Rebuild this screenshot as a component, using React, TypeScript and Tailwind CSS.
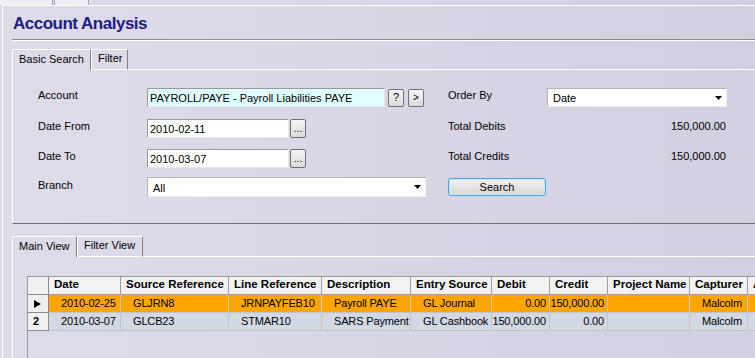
import React from "react";

type Col = {
  label: string;
  w: string;
  right?: boolean;
};

const columns: Col[] = [
  { label: "Date", w: "w-[72px]" },
  { label: "Source Reference", w: "w-[108px]" },
  { label: "Line Reference", w: "w-[93px]" },
  { label: "Description", w: "w-[89px]" },
  { label: "Entry Source", w: "w-[81px]" },
  { label: "Debit", w: "w-[58px]", right: true },
  { label: "Credit", w: "w-[58px]", right: true },
  { label: "Project Name", w: "w-[82px]" },
  { label: "Capturer", w: "w-[58px]" },
  { label: "Audit", w: "w-[80px]" },
];

const rows = [
  {
    selected: true,
    cells: ["2010-02-25", "GLJRN8", "JRNPAYFEB10", "Payroll PAYE", "GL Journal", "0.00", "150,000.00", "", "Malcolm", ""],
  },
  {
    selected: false,
    cells: ["2010-03-07", "GLCB23", "STMAR10", "SARS Payment", "GL Cashbook", "150,000.00", "0.00", "", "Malcolm", ""],
  },
];

const DropArrow = () => (
  <svg width="7" height="4" viewBox="0 0 7 4" className="shrink-0">
    <path d="M0 0 H7 L3.5 4 Z" fill="#000" />
  </svg>
);

const SmallButton = ({ children, className }: { children: React.ReactNode; className: string }) => (
  <div
    className={`flex items-center justify-center rounded-[2px] border border-[#707070] bg-gradient-to-b from-[#f6f6f6] to-[#dadada] leading-none ${className}`}
  >
    {children}
  </div>
);

const TextBox = ({ value, className }: { value: string; className: string }) => (
  <div
    className={`h-[19px] border border-t-[#9a9a9a] border-l-[#9a9a9a] border-b-[#e6e6e6] border-r-[#e6e6e6] pl-[2px] pt-[3px] leading-[13px] whitespace-nowrap overflow-hidden ${className}`}
  >
    {value}
  </div>
);

const Select = ({ value, className }: { value: string; className: string }) => (
  <div
    className={`flex items-center justify-between bg-white border border-t-[#b4b4b4] border-l-[#b4b4b4] border-b-[#eeeeee] border-r-[#eeeeee] pl-[5px] pr-[4px] ${className}`}
  >
    <span className="pt-[2px] leading-[13px]">{value}</span>
    <DropArrow />
  </div>
);

export default function App() {
  return (
    <div className="w-[755px] h-[358px] overflow-hidden bg-gradient-to-r from-[#dfdcea] to-[#d2cfe1] font-['Liberation_Sans',Arial,sans-serif] text-[11px] text-black">
      {/* clipped window tabs at the very top */}
      <div className="flex h-[5px]">
        <div className="w-[53px] bg-[#efeef4] border-r border-[#a9a9b3]" />
        <div className="ml-[1px] w-[35px] bg-[#efeef4] border-x border-[#a9a9b3]" />
      </div>

      <div className="ml-[2px] h-[353px] border-t border-l border-white">
        <h1 className="mt-[8px] pl-[10px] h-[20px] leading-[20px] text-[17px] font-bold tracking-[-0.5px] text-[#1c1c86]">
          Account Analysis
        </h1>
        <div className="mt-[5px] ml-[9px] h-[2px] border-t border-[#8c8c8c] border-b border-b-white" />

        {/* search panel */}
        <div className="mt-[8px] ml-[9px]">
          <div className="flex h-[21px]">
            <div className="w-[79px] border-t border-l border-white border-r border-r-[#808080] pl-[6px] pt-[3px] leading-[13px]">
              Basic Search
            </div>
            <div className="w-[37px] border-t border-l border-white border-r border-r-[#808080] border-b border-b-white pl-[6px] pt-[2px] leading-[13px]">
              Filter
            </div>
            <div className="flex-1 border-b border-white" />
          </div>

          <div className="h-[154px] border-l border-white border-b border-b-[#6f6f6f] pt-[18px] pl-[25px]">
            {/* row 1 */}
            <div className="flex h-[19px]">
              <div className="w-[410px] flex items-center">
                <div className="w-[109px] pb-[4px]">Account</div>
                <TextBox value="PAYROLL/PAYE - Payroll Liabilities PAYE" className="w-[238px] bg-[#e0ffff]" />
                <SmallButton className="ml-[3px] w-[16px] h-[18px] text-[11px]">?</SmallButton>
                <SmallButton className="ml-[4px] w-[16px] h-[18px] text-[10px]">&gt;</SmallButton>
              </div>
              <div className="flex items-center">
                <div className="w-[99px] pb-[4px]">Order By</div>
                <Select value="Date" className="w-[180px] h-[19px]" />
              </div>
            </div>

            {/* row 2 */}
            <div className="mt-[12px] flex h-[19px]">
              <div className="w-[410px] flex items-center">
                <div className="w-[109px] pb-[4px]">Date From</div>
                <TextBox value="2010-02-11" className="w-[142px] bg-white" />
                <SmallButton className="ml-[1px] w-[16px] h-[19px] items-end pb-[3px] text-[10px]">...</SmallButton>
              </div>
              <div className="flex items-center">
                <div className="w-[99px] pb-[4px]">Total Debits</div>
                <div className="w-[179px] text-right pb-[4px]">150,000.00</div>
              </div>
            </div>

            {/* row 3 */}
            <div className="mt-[11px] flex h-[19px]">
              <div className="w-[410px] flex items-center">
                <div className="w-[109px] pb-[4px]">Date To</div>
                <TextBox value="2010-03-07" className="w-[142px] bg-white" />
                <SmallButton className="ml-[1px] w-[16px] h-[19px] items-end pb-[3px] text-[10px]">...</SmallButton>
              </div>
              <div className="flex items-center">
                <div className="w-[99px] pb-[4px]">Total Credits</div>
                <div className="w-[179px] text-right pb-[4px]">150,000.00</div>
              </div>
            </div>

            {/* row 4 */}
            <div className="mt-[9px] flex h-[20px]">
              <div className="w-[410px] flex items-center">
                <div className="w-[109px] pb-[4px]">Branch</div>
                <Select value="All" className="w-[279px] h-[20px]" />
              </div>
              <div className="flex items-center">
                <div className="w-[98px] h-[18px] flex items-center justify-center rounded-[3px] border border-[#46a6dc] bg-gradient-to-b from-[#f3f3f3] to-[#d6d6d6] shadow-[inset_0_0_0_1px_#c6e8fa] leading-none">
                  Search
                </div>
              </div>
            </div>
          </div>
        </div>

        {/* results panel */}
        <div className="mt-[12px] ml-[9px]">
          <div className="flex h-[21px]">
            <div className="w-[65px] border-t border-l border-white border-r border-r-[#808080] pl-[6px] pt-[3px] leading-[13px]">
              Main View
            </div>
            <div className="w-[66px] border-t border-l border-white border-r border-r-[#808080] border-b border-b-white pl-[6px] pt-[2px] leading-[13px]">
              Filter View
            </div>
            <div className="flex-1 border-b border-white" />
          </div>

          <div className="h-[120px] border-l border-white pt-[19px] pl-[14px]">
            <div className="h-[120px] w-[900px] border-t border-l border-[#9a9a9a]">
              {/* header */}
              <div className="flex h-[18px]">
                <div className="w-[21px] bg-[#f0f0f0] border-r border-b border-[#8a8a8a]" />
                {columns.map((c) => (
                  <div
                    key={c.label}
                    className={`${c.w} shrink-0 bg-[#f2f2f2] border-r border-b border-[#a0a0a0] pl-[5px] flex items-center pb-[1px] text-[11.5px] font-bold whitespace-nowrap overflow-hidden`}
                  >
                    {c.label}
                  </div>
                ))}
              </div>
              {rows.map((r, i) => (
                <div key={i} className="flex h-[18px]">
                  <div className="w-[21px] bg-[#f0f0f0] border-r border-b border-[#8a8a8a] flex items-center pl-[5px] font-bold">
                    {r.selected ? (
                      <svg width="8" height="8" viewBox="0 0 8 8" className="ml-[1px]">
                        <path d="M0 0 V8 L7 4 Z" fill="#000" />
                      </svg>
                    ) : (
                      "2"
                    )}
                  </div>
                  {r.cells.map((v, j) => (
                    <div
                      key={j}
                      className={`${columns[j].w} shrink-0 border-r border-b border-[#c4c4c4] flex items-center whitespace-nowrap overflow-hidden tracking-[-0.15px] ${
                        r.selected ? "bg-[#ffa500]" : "bg-[#d2d9e5]"
                      } ${columns[j].right ? "justify-end pr-[3px]" : "pl-[12px]"}`}
                    >
                      {v}
                    </div>
                  ))}
                </div>
              ))}
            </div>
          </div>
        </div>
      </div>
    </div>
  );
}
